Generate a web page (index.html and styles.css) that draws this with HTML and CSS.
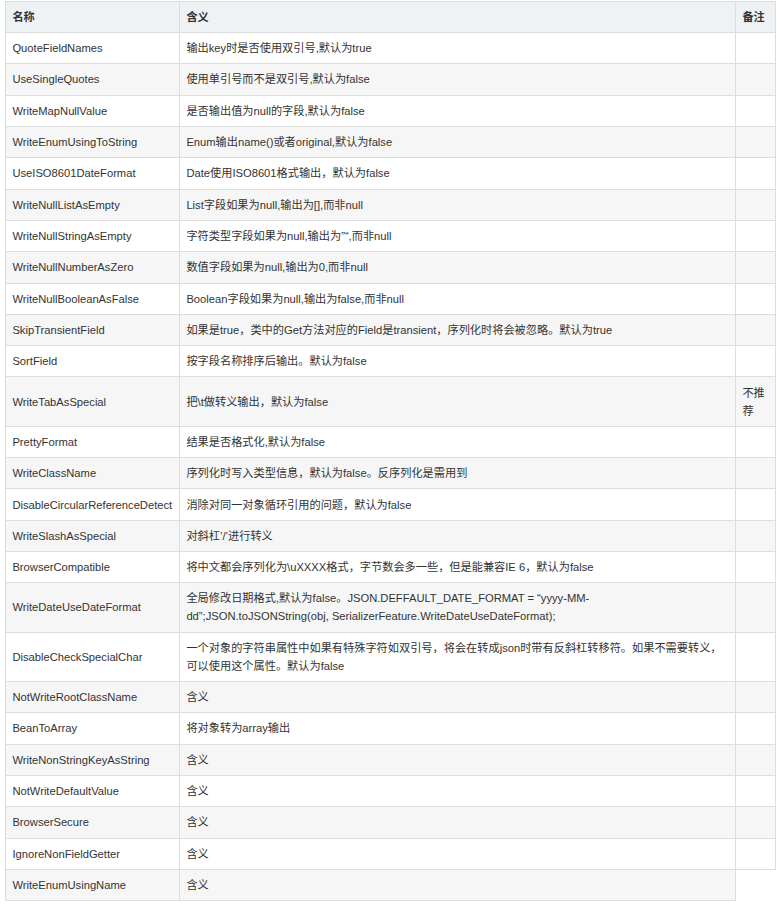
FILE: index.html
```html
<!DOCTYPE html>
<html lang="zh-CN">
<head>
<meta charset="utf-8">
<title>SerializerFeature</title>
<link rel="stylesheet" href="styles.css">
</head>
<body>
<table class="feature-table">
  <colgroup>
    <col class="col-name">
    <col class="col-desc">
    <col class="col-note">
  </colgroup>
  <thead>
    <tr><th>名称</th><th>含义</th><th>备注</th></tr>
  </thead>
  <tbody>
    <tr><td>QuoteFieldNames</td><td>输出key时是否使用双引号,默认为true</td><td></td></tr>
    <tr><td>UseSingleQuotes</td><td>使用单引号而不是双引号,默认为false</td><td></td></tr>
    <tr><td>WriteMapNullValue</td><td>是否输出值为null的字段,默认为false</td><td></td></tr>
    <tr><td>WriteEnumUsingToString</td><td>Enum输出name()或者original,默认为false</td><td></td></tr>
    <tr><td>UseISO8601DateFormat</td><td>Date使用ISO8601格式输出，默认为false</td><td></td></tr>
    <tr><td>WriteNullListAsEmpty</td><td>List字段如果为null,输出为[],而非null</td><td></td></tr>
    <tr><td>WriteNullStringAsEmpty</td><td>字符类型字段如果为null,输出为”“,而非null</td><td></td></tr>
    <tr><td>WriteNullNumberAsZero</td><td>数值字段如果为null,输出为0,而非null</td><td></td></tr>
    <tr><td>WriteNullBooleanAsFalse</td><td>Boolean字段如果为null,输出为false,而非null</td><td></td></tr>
    <tr><td>SkipTransientField</td><td>如果是true，类中的Get方法对应的Field是transient，序列化时将会被忽略。默认为true</td><td></td></tr>
    <tr><td>SortField</td><td>按字段名称排序后输出。默认为false</td><td></td></tr>
    <tr><td>WriteTabAsSpecial</td><td>把\t做转义输出，默认为false</td><td>不推荐</td></tr>
    <tr><td>PrettyFormat</td><td>结果是否格式化,默认为false</td><td></td></tr>
    <tr><td>WriteClassName</td><td>序列化时写入类型信息，默认为false。反序列化是需用到</td><td></td></tr>
    <tr><td>DisableCircularReferenceDetect</td><td>消除对同一对象循环引用的问题，默认为false</td><td></td></tr>
    <tr><td>WriteSlashAsSpecial</td><td>对斜杠’/’进行转义</td><td></td></tr>
    <tr><td>BrowserCompatible</td><td>将中文都会序列化为\uXXXX格式，字节数会多一些，但是能兼容IE 6，默认为false</td><td></td></tr>
    <tr><td>WriteDateUseDateFormat</td><td>全局修改日期格式,默认为false。JSON.DEFFAULT_DATE_FORMAT = “yyyy-MM-<br>dd”;JSON.toJSONString(obj, SerializerFeature.WriteDateUseDateFormat);</td><td></td></tr>
    <tr><td>DisableCheckSpecialChar</td><td>一个对象的字符串属性中如果有特殊字符如双引号，将会在转成json时带有反斜杠转移符。如果不需要转义，<br>可以使用这个属性。默认为false</td><td></td></tr>
    <tr><td>NotWriteRootClassName</td><td>含义</td><td></td></tr>
    <tr><td>BeanToArray</td><td>将对象转为array输出</td><td></td></tr>
    <tr><td>WriteNonStringKeyAsString</td><td>含义</td><td></td></tr>
    <tr><td>NotWriteDefaultValue</td><td>含义</td><td></td></tr>
    <tr><td>BrowserSecure</td><td>含义</td><td></td></tr>
    <tr><td>IgnoreNonFieldGetter</td><td>含义</td><td></td></tr>
    <tr><td>WriteEnumUsingName</td><td>含义</td></tr>
  </tbody>
</table>
</body>
</html>
```

FILE: styles.css
```css
html, body {
  margin: 0;
  padding: 0;
  background: #ffffff;
}

body {
  font-family: "Liberation Sans", Arial, "Noto Sans CJK SC", sans-serif;
  font-size: 11.2px;
  line-height: 18px;
  color: #333333;
}

.feature-table {
  margin: 1px 0 0 5px;
  width: 770px;
  table-layout: fixed;
  border-collapse: collapse;
  border-spacing: 0;
}

.col-name { width: 174px; }
.col-desc { width: 556px; }
.col-note { width: 40px; }

.feature-table th,
.feature-table td {
  border: 1px solid #dddddd;
  padding: 6.17px 6.4px;
  text-align: left;
  vertical-align: middle;
  word-wrap: break-word;
}

.feature-table th {
  background: #eff2f5;
  font-weight: bold;
  padding-top: 6px;
  padding-bottom: 6px;
}

.feature-table tbody tr:nth-child(even) td {
  background: #f6f6f6;
}
```
